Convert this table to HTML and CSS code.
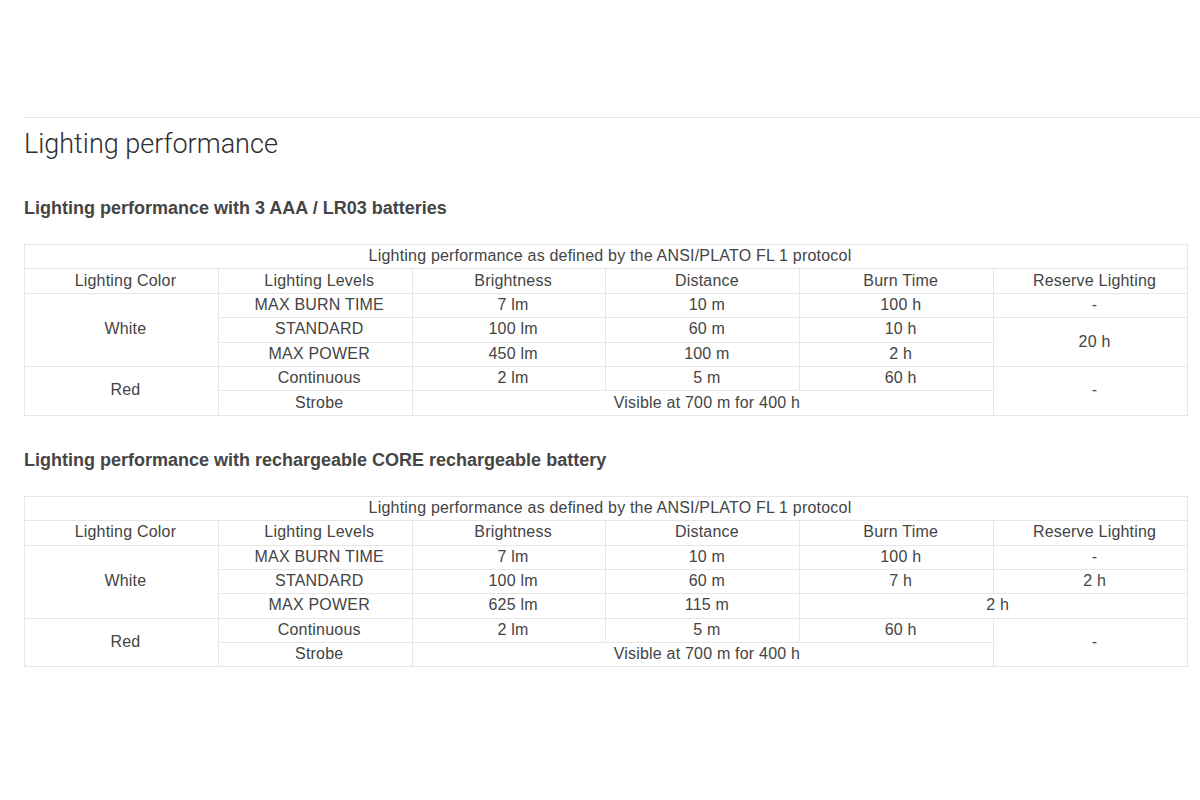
FILE: index.html
```html
<!DOCTYPE html>
<html lang="en">
<head>
<meta charset="utf-8">
<title>Lighting performance</title>
<link rel="stylesheet" href="styles.css">
</head>
<body>
<div class="page">
  <hr class="rule">
  <section class="content">
    <h1 class="title">Lighting performance</h1>

    <h2 class="subtitle first">Lighting performance with 3 AAA / LR03 batteries</h2>
    <table class="perf">
      <tr><td colspan="6">Lighting performance as defined by the ANSI/PLATO FL 1 protocol</td></tr>
      <tr><td>Lighting Color</td><td>Lighting Levels</td><td>Brightness</td><td>Distance</td><td>Burn Time</td><td>Reserve Lighting</td></tr>
      <tr><td rowspan="3">White</td><td>MAX BURN TIME</td><td>7 lm</td><td>10 m</td><td>100 h</td><td>-</td></tr>
      <tr><td>STANDARD</td><td>100 lm</td><td>60 m</td><td>10 h</td><td rowspan="2">20 h</td></tr>
      <tr><td>MAX POWER</td><td>450 lm</td><td>100 m</td><td>2 h</td></tr>
      <tr><td rowspan="2">Red</td><td>Continuous</td><td>2 lm</td><td>5 m</td><td>60 h</td><td rowspan="2">-</td></tr>
      <tr><td>Strobe</td><td colspan="3">Visible at 700 m for 400 h</td></tr>
    </table>

    <h2 class="subtitle">Lighting performance with rechargeable CORE rechargeable battery</h2>
    <table class="perf">
      <tr><td colspan="6">Lighting performance as defined by the ANSI/PLATO FL 1 protocol</td></tr>
      <tr><td>Lighting Color</td><td>Lighting Levels</td><td>Brightness</td><td>Distance</td><td>Burn Time</td><td>Reserve Lighting</td></tr>
      <tr><td rowspan="3">White</td><td>MAX BURN TIME</td><td>7 lm</td><td>10 m</td><td>100 h</td><td>-</td></tr>
      <tr><td>STANDARD</td><td>100 lm</td><td>60 m</td><td>7 h</td><td>2 h</td></tr>
      <tr><td>MAX POWER</td><td>625 lm</td><td>115 m</td><td colspan="2">2 h</td></tr>
      <tr><td rowspan="2">Red</td><td>Continuous</td><td>2 lm</td><td>5 m</td><td>60 h</td><td rowspan="2">-</td></tr>
      <tr><td>Strobe</td><td colspan="3">Visible at 700 m for 400 h</td></tr>
    </table>
  </section>
</div>
</body>
</html>
```
FILE: styles.css
```css
html, body {
  margin: 0;
  padding: 0;
  background: #ffffff;
}

body {
  font-family: "Liberation Sans", Arial, sans-serif;
  color: #444444;
}

.page {
  padding-top: 117px;
}

.rule {
  margin: 0 0 0 24px;
  border: 0;
  border-top: 1px solid #e6e6e6;
  height: 0;
}

.content {
  padding: 0 12px 0 24px;
}

.title {
  margin: 10px 0 0 0;
  font-family: Roboto, "Liberation Sans", sans-serif;
  font-weight: 300;
  font-size: 27px;
  line-height: 32px;
  color: #2e2e2e;
}

.subtitle {
  margin: 34px 0 0 0;
  font-size: 18px;
  line-height: 20px;
  font-weight: 700;
  color: #454545;
}

.subtitle.first {
  margin-top: 38px;
}

.perf {
  margin-top: 26px;
  width: 1164px;
  border-collapse: collapse;
  table-layout: fixed;
  font-size: 16px;
  letter-spacing: 0.2px;
  color: #444444;
}

.perf td {
  border: 1px solid #e6e6e6;
  height: 21.4px;
  padding: 0 0 2px 8px;
  text-align: center;
  vertical-align: middle;
  line-height: 17px;
}
```
